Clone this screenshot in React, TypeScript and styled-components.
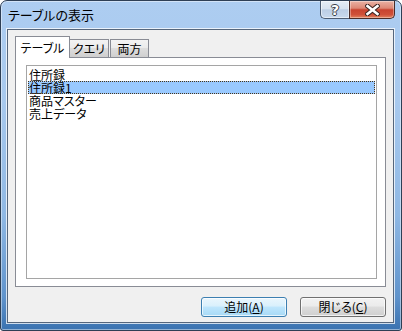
import React from "react";
import styled, { createGlobalStyle } from "styled-components";

const GlobalStyle = createGlobalStyle`
  html, body {
    margin: 0;
    padding: 0;
    background: #ffffff;
  }
  body {
    font-family: "Noto Sans CJK JP", "Noto Sans", sans-serif;
    font-feature-settings: "palt";
    font-size: 12px;
    color: #000;
  }
`;

const Window = styled.div`
  box-sizing: border-box;
  width: 402px;
  height: 331px;
  display: flex;
  flex-direction: column;
  border: 1px solid #2e3f55;
  border-radius: 7px 7px 3px 3px;
  overflow: hidden;
  background: linear-gradient(
    180deg,
    #adcdf1 0%,
    #a8c9ee 30%,
    #8fb8e4 65%,
    #5f93cc 90%,
    #3a72b0 100%
  );
  box-shadow: inset 0 0 0 1px rgba(255, 255, 255, 0.45);
`;

const TitleBar = styled.div`
  height: 28px;
  flex: none;
  display: flex;
  align-items: flex-start;
  padding: 0 6px 0 7px;
`;

const TitleText = styled.div`
  flex: 1;
  font-size: 13px;
  line-height: 28px;
  color: #000;
`;

const CaptionGroup = styled.div`
  display: flex;
  height: 18px;
`;

const HelpButton = styled.div`
  box-sizing: border-box;
  width: 29px;
  height: 18px;
  display: flex;
  align-items: center;
  justify-content: center;
  border: 1px solid #4d5d73;
  border-top: none;
  border-right: none;
  border-radius: 0 0 0 5px;
  background: linear-gradient(
    180deg,
    #e6edf6 0%,
    #d8e3f0 45%,
    #bccee5 52%,
    #c9daee 100%
  );
  box-shadow: inset 0 0 0 1px rgba(255, 255, 255, 0.5);
  font-family: "DejaVu Sans", sans-serif;
  font-weight: bold;
  font-size: 14px;
  line-height: 16px;
  color: #fff;
  text-shadow: 1px 0 #3a3f48, -1px 0 #3a3f48, 0 1px #3a3f48, 0 -1px #3a3f48;
`;

const CloseButton = styled.div`
  box-sizing: border-box;
  width: 46px;
  height: 18px;
  display: flex;
  align-items: center;
  justify-content: center;
  border: 1px solid #4a2c28;
  border-top: none;
  border-radius: 0 0 5px 0;
  background: linear-gradient(
    180deg,
    #e9b2a4 0%,
    #dd8876 42%,
    #c8432f 52%,
    #cf5039 80%,
    #e2835f 100%
  );
  box-shadow: inset 0 0 0 1px rgba(255, 255, 255, 0.35);
`;

const Client = styled.div`
  flex: 1;
  display: flex;
  flex-direction: column;
  margin: 0 7px 7px 6px;
  padding: 6px 7px 5px 7px;
  border: 1px solid #56667b;
  background: #f0f0f0;
  box-shadow: 0 0 0 1px rgba(255, 255, 255, 0.75);
`;

const TabStrip = styled.div`
  height: 21px;
  display: flex;
  align-items: flex-end;
`;

const Tab = styled.div<{ $active?: boolean; $w: number; $ml?: number }>`
  box-sizing: border-box;
  width: ${(p) => p.$w}px;
  height: ${(p) => (p.$active ? 22 : 18)}px;
  margin-left: ${(p) => p.$ml ?? 0}px;
  margin-bottom: ${(p) => (p.$active ? -1 : 0)}px;
  position: relative;
  z-index: ${(p) => (p.$active ? 2 : 1)};
  display: flex;
  align-items: center;
  justify-content: center;
  border: 1px solid #898c95;
  border-bottom: none;
  font-size: 12px;
  line-height: 14px;
  background: ${(p) =>
    p.$active
      ? "#ffffff"
      : "linear-gradient(180deg, #f3f3f3 0%, #ebebeb 45%, #dddddd 50%, #cfcfcf 100%)"};
`;

const Panel = styled.div`
  box-sizing: border-box;
  height: 230px;
  display: flex;
  padding: 7px 8px 7px 10px;
  border: 1px solid #898c95;
  background: #ffffff;
`;

const ListBox = styled.div`
  flex: 1;
  padding: 2px 1px;
  border: 1px solid #a5a5a5;
  background: #ffffff;
`;

const Row = styled.div<{ $selected?: boolean }>`
  height: 13px;
  line-height: 13px;
  padding-left: 1px;
  font-size: 12px;
  white-space: nowrap;
  background: ${(p) => (p.$selected ? "#99c9ff" : "transparent")};
  outline: ${(p) => (p.$selected ? "1px dotted #4a3518" : "none")};
  outline-offset: -1px;
`;

const ButtonRow = styled.div`
  margin-top: 10px;
  height: 20px;
  display: flex;
  justify-content: flex-end;
  gap: 13px;
`;

const Button = styled.div<{ $default?: boolean }>`
  box-sizing: border-box;
  width: 86px;
  height: 20px;
  display: flex;
  align-items: center;
  justify-content: center;
  border: 1px solid ${(p) => (p.$default ? "#3c7fb1" : "#707070")};
  border-radius: 3px;
  font-size: 12px;
  line-height: 14px;
  background: ${(p) =>
    p.$default
      ? "linear-gradient(180deg, #eaf6fd 0%, #d9f0fc 45%, #bee6fd 50%, #a7d9f5 100%)"
      : "linear-gradient(180deg, #f2f2f2 0%, #ebebeb 45%, #dddddd 50%, #cfcfcf 100%)"};
  box-shadow: inset 0 0 0 1px rgba(255, 255, 255, 0.7);

  u {
    text-underline-offset: 1px;
  }
`;

function CloseGlyph() {
  return (
    <svg width="15" height="12" viewBox="0 0 15 12">
      <path
        d="M2.5 2 L12.5 10 M12.5 2 L2.5 10"
        stroke="#3b2421"
        strokeWidth="4.6"
        strokeLinecap="square"
      />
      <path
        d="M2.5 2 L12.5 10 M12.5 2 L2.5 10"
        stroke="#ffffff"
        strokeWidth="2.6"
        strokeLinecap="square"
      />
    </svg>
  );
}

const tables = ["住所録", "住所録1", "商品マスター", "売上データ"];

export default function App() {
  return (
    <>
      <GlobalStyle />
      <Window>
        <TitleBar>
          <TitleText>テーブルの表示</TitleText>
          <CaptionGroup>
            <HelpButton>?</HelpButton>
            <CloseButton>
              <CloseGlyph />
            </CloseButton>
          </CaptionGroup>
        </TitleBar>
        <Client>
          <TabStrip>
            <Tab $active $w={55}>
              テーブル
            </Tab>
            <Tab $w={40} $ml={-1}>
              クエリ
            </Tab>
            <Tab $w={39} $ml={1}>
              両方
            </Tab>
          </TabStrip>
          <Panel>
            <ListBox>
              {tables.map((name, i) => (
                <Row key={name} $selected={i === 1}>
                  {name}
                </Row>
              ))}
            </ListBox>
          </Panel>
          <ButtonRow>
            <Button $default>
              追加(<u>A</u>)
            </Button>
            <Button>
              閉じる(<u>C</u>)
            </Button>
          </ButtonRow>
        </Client>
      </Window>
    </>
  );
}
